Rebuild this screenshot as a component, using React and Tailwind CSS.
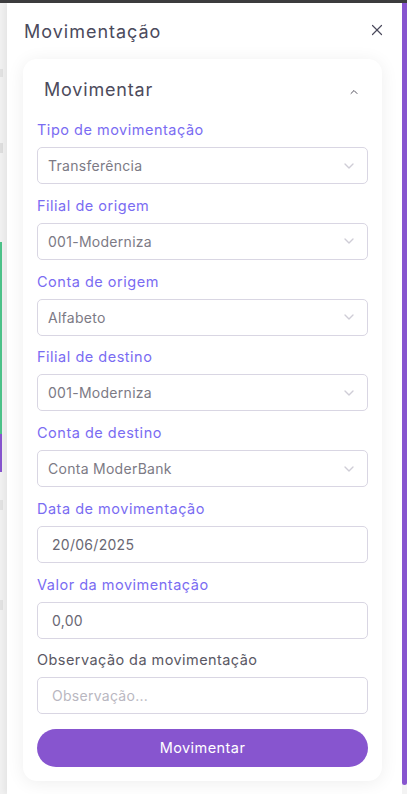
import { X, ChevronUp, ChevronDown } from "lucide-react"

const fields = [
  { label: "Tipo de movimentação", value: "Transferência", select: true },
  { label: "Filial de origem", value: "001-Moderniza", select: true },
  { label: "Conta de origem", value: "Alfabeto", select: true },
  { label: "Filial de destino", value: "001-Moderniza", select: true },
  { label: "Conta de destino", value: "Conta ModerBank", select: true },
  { label: "Data de movimentação", value: "20/06/2025" },
  { label: "Valor da movimentação", value: "0,00" },
]

function Field({ label, value, select }) {
  return (
    <div className="flex flex-col">
      <label className="text-[14.5px] leading-5 tracking-[0.035em] text-[#7a6cf2]">{label}</label>
      <div className="mt-[7px] flex h-[37px] items-center justify-between rounded-[5px] border border-[#d9d6e3] bg-white pr-[10px]">
        {select ? (
          <>
            <span className="pl-[10px] text-[14px] tracking-[0.02em] text-[#7c7a85]">{value}</span>
            <ChevronDown className="h-[16px] w-[16px] text-[#cfcdd6]" strokeWidth={2} />
          </>
        ) : (
          <span className="pl-[14px] text-[14px] tracking-[0.02em] text-[#696773]">{value}</span>
        )}
      </div>
    </div>
  )
}

export default function App() {
  return (
    <div className="flex h-[794px] w-full flex-col overflow-hidden bg-[#ececec] font-['Inter',sans-serif]">
      {/* top edge of the window behind */}
      <div className="h-[3px] bg-[#3d3d3f]" />

      <div className="flex flex-1">
        {/* page behind the drawer */}
        <div className="flex w-[7px] flex-col bg-[#f1f1f1]">
          <div className="h-[66px]" />
          <div className="h-[8px] w-[3px] bg-[#e2e2e2]" />
          <div className="h-[66px]" />
          <div className="h-[10px] w-[3px] bg-[#dedede]" />
          <div className="h-[89px]" />
          <div className="h-[192px] w-[2px] bg-[#4cc38a]" />
          <div className="h-[38px] w-[2px] bg-[#8755cf]" />
          <div className="h-[28px]" />
          <div className="h-[10px] w-[3px] bg-[#e2e2e2]" />
          <div className="h-[90px]" />
          <div className="h-[10px] w-[3px] bg-[#e2e2e2]" />
        </div>

        {/* drawer */}
        <div className="flex flex-1 bg-white shadow-[-3px_0_6px_rgba(0,0,0,0.05)]">
          <div className="flex flex-1 flex-col">
            <div className="flex items-start justify-between pl-[17px] pr-[16px] pt-[15px]">
              <h2 className="text-[18px] leading-7 tracking-[0.055em] text-[#4b4a5c]">Movimentação</h2>
              <X className="mt-[3px] h-[18px] w-[18px] text-[#4b4a5c]" strokeWidth={1.6} />
            </div>

            <div className="ml-[16px] mr-[20px] mt-[13px] flex flex-col rounded-[14px] bg-white px-[14px] pb-[14px] shadow-[0_2px_18px_rgba(0,0,0,0.07)]">
              <div className="flex items-center justify-between pl-[7px] pr-[8px] pt-[17px]">
                <h3 className="text-[18px] leading-7 tracking-[0.045em] text-[#4d4b5c]">Movimentar</h3>
                <ChevronUp className="mt-[4px] h-[12px] w-[12px] text-[#55535f]" strokeWidth={2} />
              </div>

              <div className="mt-[16px] flex flex-col gap-[11.75px]">
                {fields.map((f) => (
                  <Field key={f.label} {...f} />
                ))}

                <div className="flex flex-col">
                  <label className="text-[14.5px] leading-5 tracking-[0.03em] text-[#5a5864]">
                    Observação da movimentação
                  </label>
                  <div className="mt-[7px] flex h-[37px] items-center rounded-[5px] border border-[#d9d6e3] bg-white">
                    <span className="pl-[14px] text-[14px] tracking-[0.02em] text-[#b9b7c1]">Observação...</span>
                  </div>
                </div>
              </div>

              <button className="mt-[15px] h-[38px] w-full rounded-full bg-[#8755cf] text-[14.5px] tracking-[0.03em] text-white">
                Movimentar
              </button>
            </div>
          </div>

          {/* scrollbar */}
          <div className="flex w-[5px] flex-col bg-[#f3f3f3]">
            <div className="h-[782px] rounded-b-[3px] bg-[#8755cf]" />
          </div>
        </div>
      </div>
    </div>
  )
}
